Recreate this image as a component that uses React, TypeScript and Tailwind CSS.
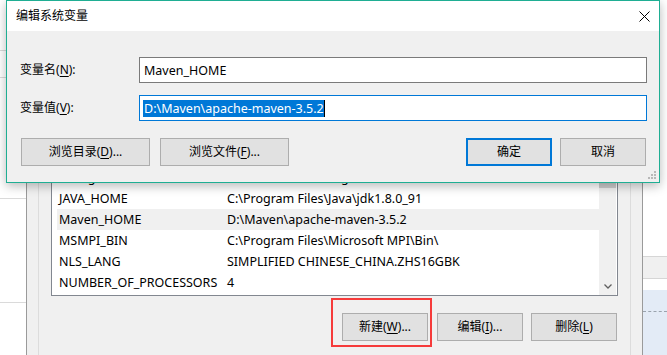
import React from 'react';

type Row = { name: string; value: string; selected?: boolean };

const rows: Row[] = [
  { name: 'ComSpec', value: 'C:\\WINDOWS\\system32\\cmd.exe' },
  { name: 'configsetroot', value: 'C:\\WINDOWS\\ConfigSetRoot' },
  { name: 'JAVA_HOME', value: 'C:\\Program Files\\Java\\jdk1.8.0_91' },
  { name: 'Maven_HOME', value: 'D:\\Maven\\apache-maven-3.5.2', selected: true },
  { name: 'MSMPI_BIN', value: 'C:\\Program Files\\Microsoft MPI\\Bin\\' },
  { name: 'NLS_LANG', value: 'SIMPLIFIED CHINESE_CHINA.ZHS16GBK' },
  { name: 'NUMBER_OF_PROCESSORS', value: '4' },
];

// text like "新建(W)..." with the access key underlined
const AccessText: React.FC<{ label: string; hotkey: string; suffix?: string }> = ({ label, hotkey, suffix = '' }) => (
  <span className="flex whitespace-nowrap">
    <span>{label}(</span>
    <span className="underline underline-offset-2">{hotkey}</span>
    <span>){suffix}</span>
  </span>
);

// Win10 style push button
const WinButton: React.FC<{ label: string; hotkey?: string; suffix?: string; focused?: boolean; className?: string }> = ({
  label,
  hotkey,
  suffix = '',
  focused,
  className = '',
}) => (
  <div
    className={`flex h-[28px] items-center justify-center bg-[#e1e1e1] text-[12px] leading-[16px] text-black ${
      focused ? 'border-2 border-[#0078d7]' : 'border border-[#adadad]'
    } ${className}`}
  >
    {hotkey ? <AccessText label={label} hotkey={hotkey} suffix={suffix} /> : <span>{label}</span>}
  </div>
);

const CloseIcon = () => (
  <svg width="11" height="11" viewBox="0 0 11 11" fill="none">
    <path d="M0.5 0.5L10.5 10.5M10.5 0.5L0.5 10.5" stroke="#000" strokeWidth="1" />
  </svg>
);

const Grip = () => (
  <svg width="9" height="9" viewBox="0 0 9 9" fill="#b8b8b8">
    <rect x="6" y="0" width="2" height="2" />
    <rect x="3" y="3" width="2" height="2" />
    <rect x="6" y="3" width="2" height="2" />
    <rect x="0" y="6" width="2" height="2" />
    <rect x="3" y="6" width="2" height="2" />
    <rect x="6" y="6" width="2" height="2" />
  </svg>
);

const App: React.FC = () => {
  return (
    <div className="relative flex h-[355px] w-[667px] overflow-hidden bg-white font-['Noto_Sans','Noto_Sans_CJK_SC',sans-serif] text-black">
      {/* window behind, left side */}
      <div className="flex w-[26px] flex-col bg-white">
        <div className="h-[51px] border-b border-[#dadada]" />
        <div className="h-[27px] border-b border-[#dadada]" />
        <div className="h-[121px] border-b border-[#dadada]" />
        <div className="h-[104px] border-b border-[#dadada]" />
      </div>

      {/* 环境变量 dialog behind */}
      <div className="flex w-[617px] flex-col border-x border-[#9a9a9a] bg-[#f0f0f0]">
        <div className="ml-[11px] mr-[11px] flex flex-1 flex-col border-x border-[#dcdcdc] pt-[145px]">
          <div className="mx-[12px] flex h-[151px] border border-[#828790] bg-white">
            <div className="flex flex-1 flex-col pl-[5px]">
              {rows.map((r) => (
                <div
                  key={r.name}
                  className={`flex h-[21px] items-center pl-[2px] text-[12.5px] leading-[21px] ${
                    r.selected ? 'bg-[#f0f0f0]' : ''
                  }`}
                >
                  <span className="w-[168px] whitespace-nowrap">{r.name}</span>
                  <span className="whitespace-nowrap">{r.value}</span>
                </div>
              ))}
            </div>
            <div className="mr-[1px] flex w-[17px] flex-col bg-[#f0f0f0]">
              <div className="h-[42px] bg-[#cdcdcd]" />
              <div className="flex-1" />
              <div className="flex h-[17px] items-center justify-center">
                <svg width="8" height="5" viewBox="0 0 8 5" fill="none">
                  <path d="M0.5 0.5L4 4L7.5 0.5" stroke="#606060" strokeWidth="1.3" />
                </svg>
              </div>
            </div>
          </div>

          <div className="mt-[17px] flex justify-end pr-[13px]">
            <WinButton label="新建" hotkey="W" suffix="..." className="w-[86px]" />
            <WinButton label="编辑" hotkey="I" suffix="..." className="ml-[9px] w-[86px]" />
            <WinButton label="删除" hotkey="L" className="ml-[8px] w-[86px]" />
          </div>
        </div>
      </div>

      {/* window behind, right side */}
      <div className="flex w-[24px] flex-col bg-white">
        <div className="h-[257px] border-b border-[#d6d6d6]" />
        <div className="h-[22px] border-b border-[#d6d6d6] bg-[#f0f0f0]" />
        <div className="h-[11px]" />
        <div className="flex-1 bg-[#e3ebf6]">
          <div className="h-[22px] border-b border-dashed border-[#9aa3ad]" />
        </div>
      </div>

      {/* red annotation */}
      <div className="absolute left-[331px] top-[298px] h-[49px] w-[101px] border-2 border-[#f63b3b]" />

      {/* 编辑系统变量 dialog */}
      <div className="absolute left-[6px] top-0 flex h-[183px] w-[654px] flex-col border border-[#1fae93] bg-[#f0f0f0] shadow-[0_3px_10px_rgba(0,0,0,0.28)]">
        <div className="flex h-[30px] items-center justify-between bg-white pl-[9px] pr-[9px]">
          <span className="text-[12px] leading-[16px]">编辑系统变量</span>
          <CloseIcon />
        </div>

        <div className="relative flex flex-1 flex-col pl-[13px] pr-[12px] pt-[26px]">
          <div className="flex items-center">
            <div className="w-[119px] text-[12px] leading-[16px]">
              <AccessText label="变量名" hotkey="N" suffix=":" />
            </div>
            <div className="flex h-[26px] w-[508px] items-center border border-[#7a7a7a] bg-white pl-[4px] text-[12.5px] leading-[17px]">
              Maven_HOME
            </div>
          </div>

          <div className="mt-[12px] flex items-center">
            <div className="w-[119px] text-[12px] leading-[16px]">
              <AccessText label="变量值" hotkey="V" suffix=":" />
            </div>
            <div className="flex h-[26px] w-[508px] items-center border border-[#0078d7] bg-white pl-[3px] text-[12.5px] leading-[17px]">
              <span className="border-r border-black bg-[#0078d7] pl-[1px] text-white">D:\Maven\apache-maven-3.5.2</span>
            </div>
          </div>

          <div className="mt-[17px] flex items-center">
            <WinButton label="浏览目录" hotkey="D" suffix="..." className="ml-[1px] w-[129px]" />
            <WinButton label="浏览文件" hotkey="F" suffix="..." className="ml-[10px] w-[129px]" />
            <div className="flex-1" />
            <WinButton label="确定" focused className="w-[86px]" />
            <WinButton label="取消" className="ml-[8px] mr-[1px] w-[86px]" />
          </div>

          <div className="absolute bottom-[2px] right-[2px]">
            <Grip />
          </div>
        </div>
      </div>
    </div>
  );
};

export default App;
